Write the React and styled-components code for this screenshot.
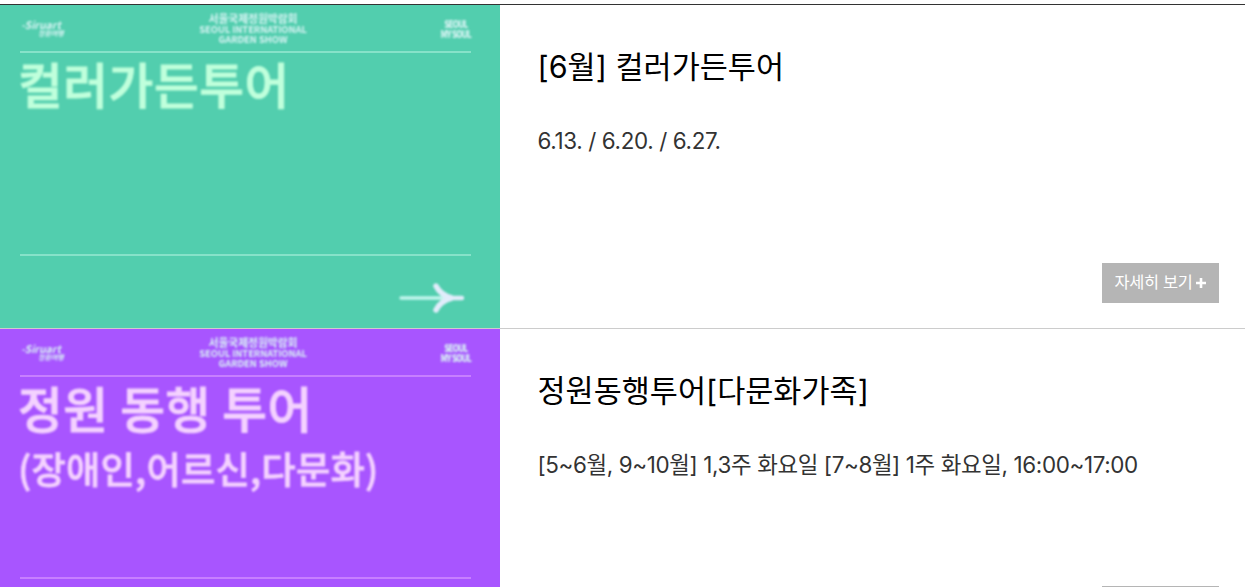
import React from 'react'
import styled, { createGlobalStyle } from 'styled-components'

const tours = [
    {
        id: 1,
        height: 324,
        title: '[6월] 컬러가든투어',
        date: '6.13. / 6.20. / 6.27.',
        poster: { bg: '#52ceae', color: '#c0ffdc', line: '#86e2c9', heading: '컬러가든투어' },
    },
    {
        id: 2,
        height: 323,
        title: '정원동행투어[다문화가족]',
        date: '[5~6월, 9~10월] 1,3주 화요일 [7~8월] 1주 화요일, 16:00~17:00',
        poster: { bg: '#a855ff', color: '#f4d2ff', line: '#c77fff', heading: '정원 동행 투어', sub: '(장애인,어르신,다문화)' },
    },
]

function Poster({ bg, color, line, heading, sub }) {
    return (
        <PosterStyled $bg={bg} $color={color}>
            <PosterTop $line={line}>
                <BrandLogo>
                    <span>-Siruart</span>
                    <span>정원여행</span>
                </BrandLogo>
                <ShowLogo>
                    <span className="ko">서울국제정원박람회</span>
                    <span>SEOUL INTERNATIONAL</span>
                    <span>GARDEN SHOW</span>
                </ShowLogo>
                <CityLogo>
                    <span>SEOUL</span>
                    <span>MY SOUL</span>
                </CityLogo>
            </PosterTop>
            <PosterBody $line={line}>
                <PosterHeading>{heading}</PosterHeading>
                {sub && <PosterSub>{sub}</PosterSub>}
            </PosterBody>
            <Arrow viewBox="0 0 68 32" fill="none" stroke="#e2ecfb" strokeLinecap="round">
                <path d="M3 15H64" stroke="#c4f6ee" strokeWidth="3.4" />
                <path d="M38 3C41 9 46 13 54 15C46 17 41 21 38 27" strokeWidth="5.5" />
                <path d="M50 15H64" strokeWidth="4.4" />
            </Arrow>
        </PosterStyled>
    )
}

function App() {
    return (
        <>
            <GlobalStyle />
            <TourList>
                {tours.map(tour => (
                    <TourItem key={tour.id} $height={tour.height}>
                        <Poster {...tour.poster} />
                        <TourInfo>
                            <TourTitle>{tour.title}</TourTitle>
                            <TourDate>{tour.date}</TourDate>
                            <MoreButton>
                                자세히 보기
                                <svg width="10" height="10" viewBox="0 0 10 10">
                                    <path d="M5 0V10M0 5H10" stroke="#fff" strokeWidth="2.6" />
                                </svg>
                            </MoreButton>
                        </TourInfo>
                    </TourItem>
                ))}
            </TourList>
        </>
    )
}

const GlobalStyle = createGlobalStyle`
    *{
        margin: 0;
        padding: 0;
        box-sizing: border-box;
    }
    body{
        background: #fff;
        overflow: hidden;
        font-family: Inter, 'Noto Sans CJK KR', sans-serif;
    }
`;

const TourList = styled.ul`
    list-style: none;
    margin-top: 4px;
    border-top: 1px solid #333;
    height: 583px;
    overflow: hidden;
`;

const TourItem = styled.li`
    display: flex;
    height: ${props => props.$height}px;
    border-bottom: 1px solid #ccc;
`;

const PosterStyled = styled.div`
    flex: 0 0 500px;
    display: flex;
    flex-direction: column;
    padding: 8px 29px 0 20px;
    overflow: hidden;
    background: ${props => props.$bg};
    color: ${props => props.$color};
    font-family: 'Noto Sans CJK KR', sans-serif;
`;

const PosterTop = styled.div`
    display: grid;
    grid-template-columns: 178px 110px 1fr;
    height: 40px;
    flex-shrink: 0;
    border-bottom: 2px solid ${props => props.$line};
    color: #d9f4f4;
    white-space: nowrap;
    span{
        display: block;
        filter: blur(0.8px);
    }
`;

const BrandLogo = styled.div`
    padding: 7px 0 0 1px;
    font-size: 10.5px;
    line-height: 10px;
    font-style: italic;
    font-weight: 700;
    span + span{
        font-size: 7px;
        line-height: 6px;
        padding-left: 17px;
    }
`;

const ShowLogo = styled.div`
    text-align: center;
    font-size: 9.4px;
    line-height: 10px;
    font-weight: 700;
    letter-spacing: -0.05px;
    .ko{
        font-size: 10.8px;
        line-height: 11px;
    }
`;

const CityLogo = styled.div`
    justify-self: end;
    padding-top: 6px;
    text-align: center;
    font-size: 8px;
    line-height: 10px;
    font-weight: 900;
    letter-spacing: -0.8px;
    span{
        transform: scaleY(1.25);
    }
`;

const PosterBody = styled.div`
    flex: 1;
    border-bottom: 2px solid ${props => props.$line};
`;

const PosterHeading = styled.h2`
    margin-left: -2px;
    font-size: 48.6px;
    line-height: 61px;
    font-weight: 500;
    letter-spacing: 0.6px;
    white-space: nowrap;
    -webkit-text-stroke: 1px currentColor;
    filter: blur(0.8px);
`;

const PosterSub = styled.p`
    margin-left: -2px;
    font-size: 37.4px;
    line-height: 54px;
    padding-top: 3px;
    font-weight: 500;
    white-space: nowrap;
    letter-spacing: 0.15px;
    -webkit-text-stroke: 0.8px currentColor;
    filter: blur(0.8px);
`;

const Arrow = styled.svg`
    flex-shrink: 0;
    align-self: flex-end;
    width: 68px;
    height: 32px;
    margin: 27px 5px 13px 0;
    filter: blur(0.8px);
`;

const TourInfo = styled.div`
    flex: 1;
    display: flex;
    flex-direction: column;
    align-items: flex-start;
    padding: 40px 26px 25px 37.5px;
`;

const TourTitle = styled.h3`
    font-size: 30.5px;
    line-height: 44px;
    font-weight: 400;
    color: #000;
    letter-spacing: 0.03px;
`;

const TourDate = styled.p`
    margin-top: 36px;
    font-size: 22.4px;
    line-height: 32px;
    color: #333;
    letter-spacing: -0.36px;
`;

const MoreButton = styled.button`
    margin-top: auto;
    align-self: flex-end;
    display: flex;
    align-items: center;
    justify-content: center;
    gap: 3px;
    width: 117px;
    height: 40px;
    padding: 0 1px 4px 0;
    border: 0;
    background: #b5b5b5;
    color: #fff;
    font-family: inherit;
    font-size: 16.4px;
    letter-spacing: -0.3px;
    svg{
        margin-top: 4px;
    }
`;

export default App
